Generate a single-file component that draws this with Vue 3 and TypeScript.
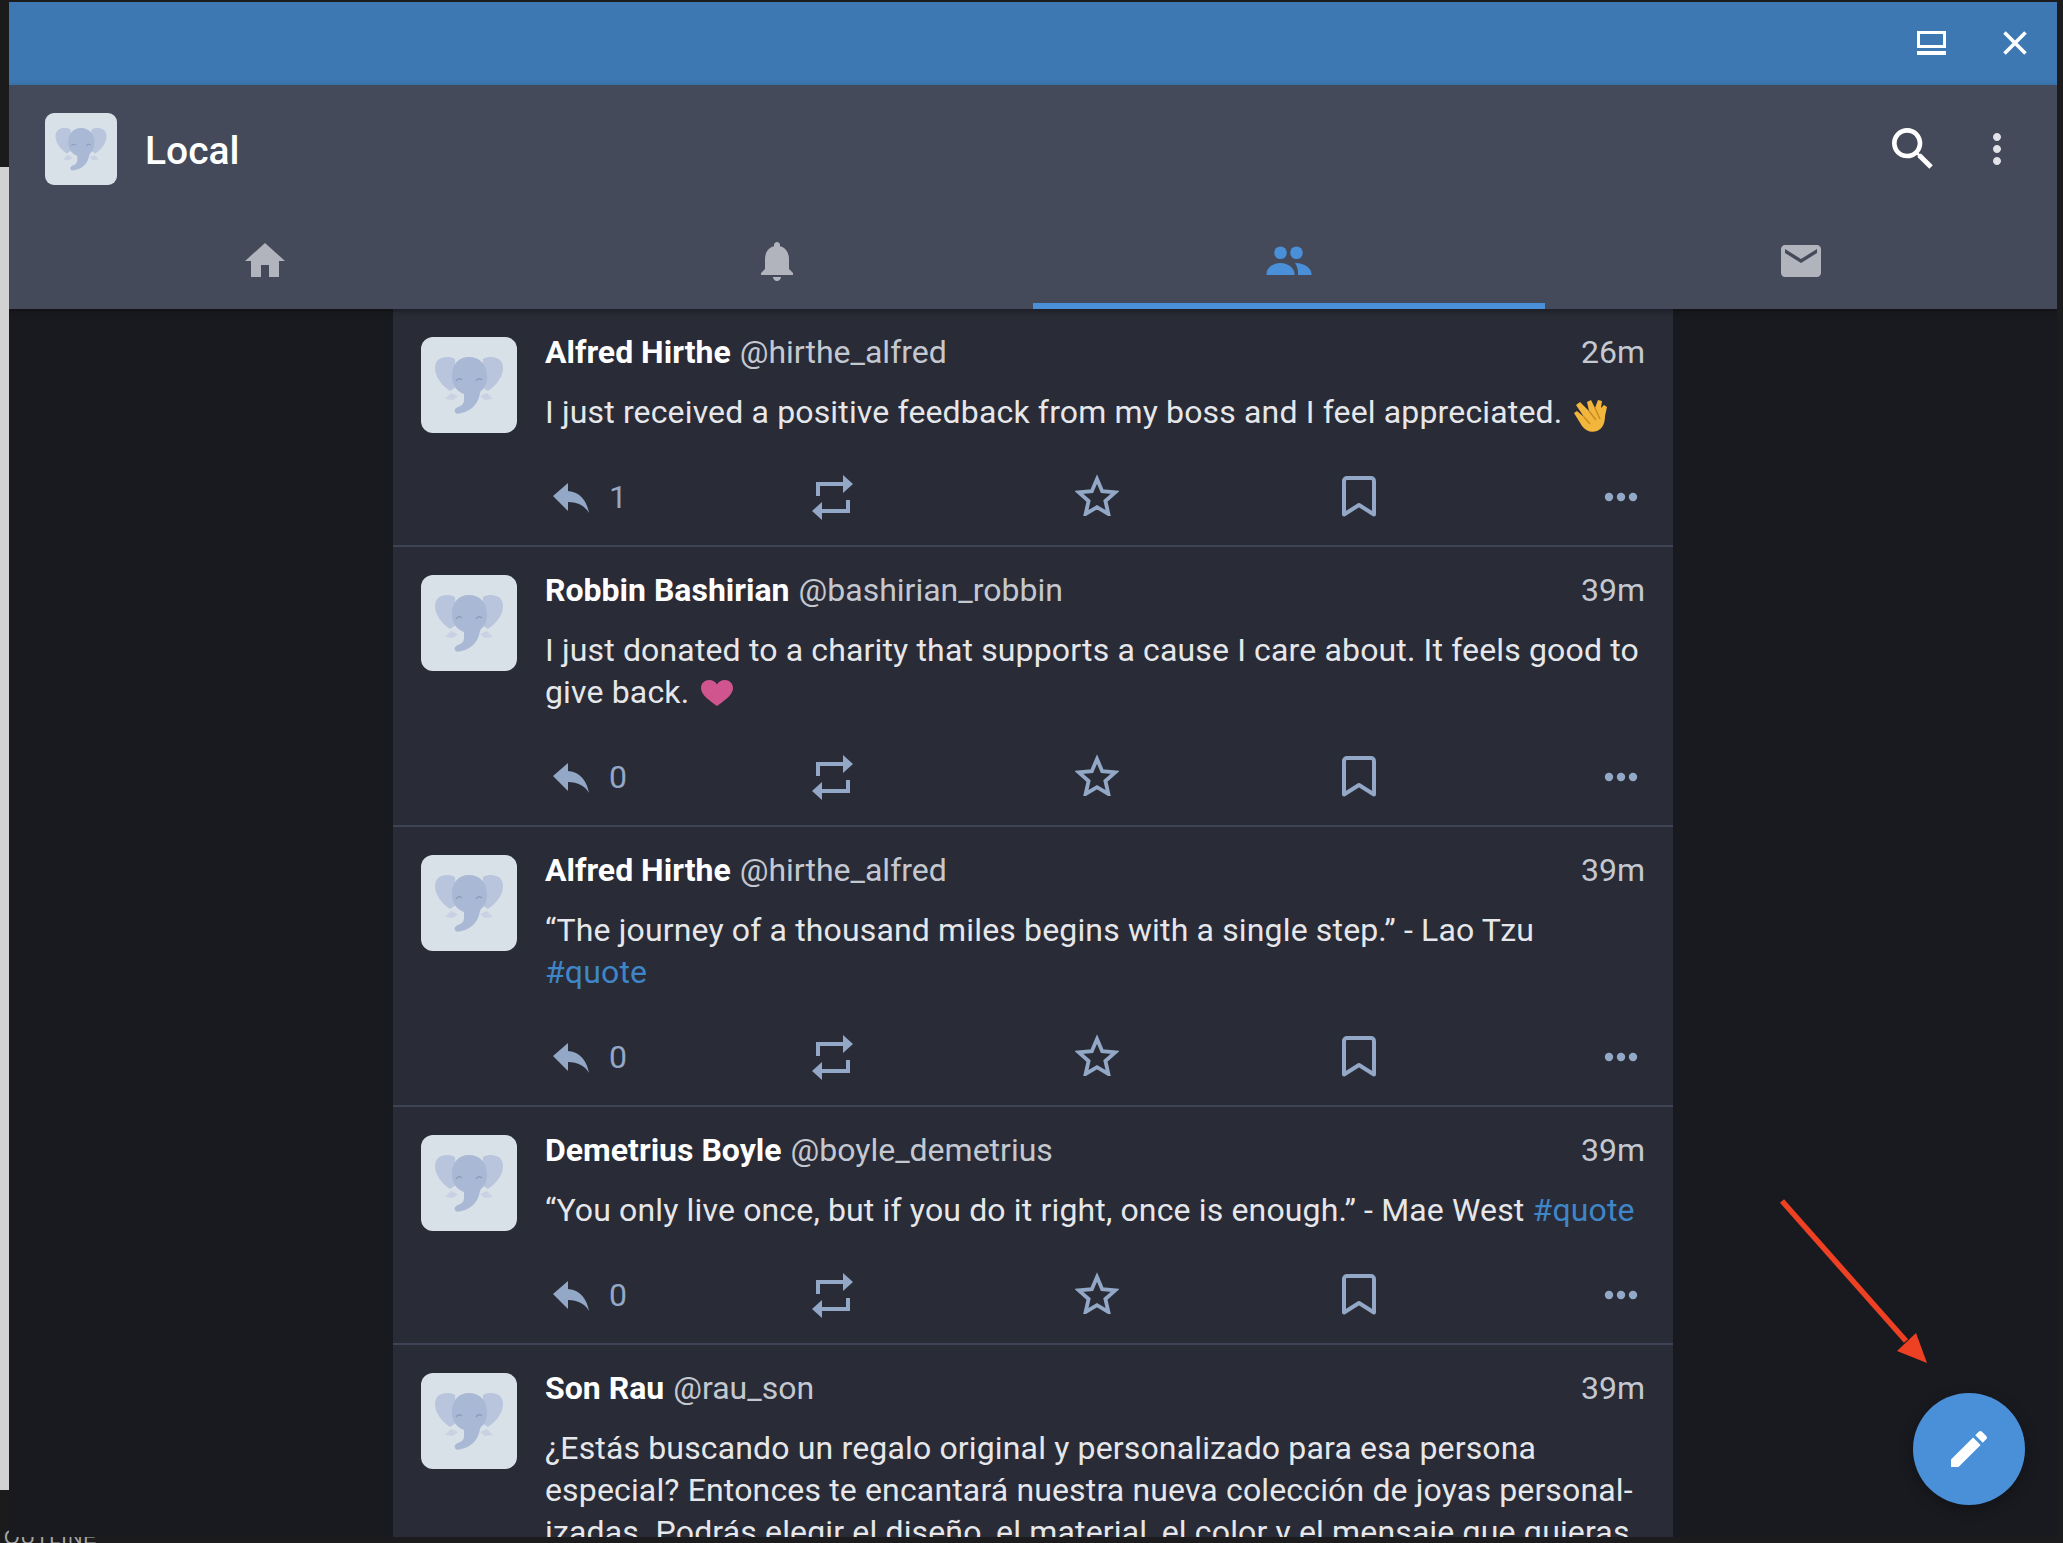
<script setup lang="ts">
type Seg = { k: 'text' | 'tag' | 'heart' | 'clap'; v?: string }
type Post = { name: string; handle: string; time: string; replies?: string; body: Seg[] }

const posts: Post[] = [
  {
    name: 'Alfred Hirthe', handle: '@hirthe_alfred', time: '26m', replies: '1',
    body: [{ k: 'text', v: 'I just received a positive feedback from my boss and I feel appreciated. ' }, { k: 'clap' }],
  },
  {
    name: 'Robbin Bashirian', handle: '@bashirian_robbin', time: '39m', replies: '0',
    body: [{ k: 'text', v: 'I just donated to a charity that supports a cause I care about. It feels good to give back. ' }, { k: 'heart' }],
  },
  {
    name: 'Alfred Hirthe', handle: '@hirthe_alfred', time: '39m', replies: '0',
    body: [{ k: 'text', v: '“The journey of a thousand miles begins with a single step.” - Lao Tzu\n' }, { k: 'tag', v: '#quote' }],
  },
  {
    name: 'Demetrius Boyle', handle: '@boyle_demetrius', time: '39m', replies: '0',
    body: [{ k: 'text', v: '“You only live once, but if you do it right, once is enough.” - Mae West ' }, { k: 'tag', v: '#quote' }],
  },
  {
    name: 'Son Rau', handle: '@rau_son', time: '39m',
    body: [{ k: 'text', v: '¿Estás buscando un regalo original y personalizado para esa persona\nespecial? Entonces te encantará nuestra nueva colección de joyas personal-\nizadas. Podrás elegir el diseño, el material, el color y el mensaje que quieras' }],
  },
]

const tabs = [
  { id: 'home', d: 'M10 20v-6h4v6h5v-8h3L12 3 2 12h3v8z' },
  { id: 'bell', d: 'M12 22c1.1 0 2-.9 2-2h-4c0 1.1.9 2 2 2zm6-6v-5c0-3.07-1.63-5.64-4.5-6.32V4c0-.83-.67-1.5-1.5-1.5s-1.5.67-1.5 1.5v.68C7.64 5.36 6 7.92 6 11v5l-2 2v1h16v-1l-2-2z' },
  { id: 'people', d: '' },
  { id: 'mail', d: 'M20 4H4c-1.1 0-1.99.9-1.99 2L2 18c0 1.1.9 2 2 2h16c1.1 0 2-.9 2-2V6c0-1.1-.9-2-2-2zm0 4l-8 5-8-5V6l8 5 8-5v2z' },
]
</script>

<template>
  <div class="page">
    <span class="behind">OUTLINE</span>
    <div class="window">
      <div class="titlebar">
        <svg class="tb-screen" width="30" height="24" viewBox="0 0 30 24">
          <rect x="1.5" y="1.5" width="26" height="14" fill="none" stroke="#fff" stroke-width="3" />
          <rect x="0" y="20" width="29" height="4" fill="#fff" />
        </svg>
        <svg class="tb-close" width="26" height="26" viewBox="0 0 26 26">
          <path d="M2.5 2.5l21 21M23.5 2.5l-21 21" stroke="#fff" stroke-width="3.6" fill="none" />
        </svg>
      </div>

      <header class="header">
        <div class="toolbar">
          <svg class="avatar small" viewBox="0 0 96 96">
            <rect width="96" height="96" rx="12" fill="#d9e1e8" />
            <path d="M34 22c-8-4-20-2-20 9 0 8 6 17 15 23l6-4z" fill="#b8c5dc" />
            <path d="M62 22c8-4 20-2 20 9 0 8-6 17-15 23l-6-4z" fill="#b8c5dc" />
            <path d="M30 56l-6 6 8 1 5-4zM66 56l6 6-8 1-5-4z" fill="#c8d2e3" />
            <path d="M48 20c-10 0-17 7-17 19 0 9 5 16 12 18v6c0 4-3 6-6 7-3 1-4 3-3 5 1 2 3 2 6 1 7-1 14-6 17-13 2-5 2-8 3-9 4-3 6-8 6-15 0-12-8-19-18-19z" fill="#a9b9d5" />
            <path d="M35 44q3-4 6-1M55 44q3-4 6-1" stroke="#8c9dbe" stroke-width="1.4" fill="none" />
          </svg>
          <h1 class="title">Local</h1>
          <svg class="tool-search" width="56" height="56" viewBox="0 0 24 24">
            <path fill="#fff" d="M15.5 14h-.79l-.28-.27C15.41 12.59 16 11.11 16 9.5 16 5.91 13.09 3 9.5 3S3 5.91 3 9.5 5.91 16 9.5 16c1.61 0 3.09-.59 4.23-1.57l.27.28v.79l5 4.99L20.49 19l-4.99-5zm-6 0C7.01 14 5 11.99 5 9.5S7.01 5 9.5 5 14 7.01 14 9.5 11.99 14 9.5 14z" />
          </svg>
          <svg class="tool-more" width="48" height="48" viewBox="0 0 24 24">
            <path fill="#e2e3e6" d="M12 8c1.1 0 2-.9 2-2s-.9-2-2-2-2 .9-2 2 .9 2 2 2zm0 2c-1.1 0-2 .9-2 2s.9 2 2 2 2-.9 2-2-.9-2-2-2zm0 6c-1.1 0-2 .9-2 2s.9 2 2 2 2-.9 2-2-.9-2-2-2z" />
          </svg>
        </div>
        <nav class="tabs">
          <div v-for="t in tabs" :key="t.id" class="tab" :class="{ active: t.id === 'people' }">
            <svg v-if="t.d" width="48" height="48" viewBox="0 0 24 24"><path fill="#b1b4bd" :d="t.d" /></svg>
            <svg v-else width="48" height="48" viewBox="0 0 48 48" fill="#4a90d9">
              <circle cx="15.5" cy="15.7" r="6.3" />
              <circle cx="31.5" cy="15.7" r="6.3" />
              <path d="M1.5 38v-1c0-6 6.5-11 14-11s14 5 14 11v1z" />
              <path d="M31 26c8 0 15.5 5 15.5 11v1H33v-2c0-4-1-7-3-10z" />
            </svg>
          </div>
        </nav>
      </header>

      <main class="content">
        <section class="column">
          <article v-for="(p, i) in posts" :key="i" class="post">
            <svg class="avatar" viewBox="0 0 96 96">
              <rect width="96" height="96" rx="12" fill="#d9e1e8" />
              <path d="M34 22c-8-4-20-2-20 9 0 8 6 17 15 23l6-4z" fill="#b8c5dc" />
              <path d="M62 22c8-4 20-2 20 9 0 8-6 17-15 23l-6-4z" fill="#b8c5dc" />
              <path d="M30 56l-6 6 8 1 5-4zM66 56l6 6-8 1-5-4z" fill="#c8d2e3" />
              <path d="M48 20c-10 0-17 7-17 19 0 9 5 16 12 18v6c0 4-3 6-6 7-3 1-4 3-3 5 1 2 3 2 6 1 7-1 14-6 17-13 2-5 2-8 3-9 4-3 6-8 6-15 0-12-8-19-18-19z" fill="#a9b9d5" />
              <path d="M35 44q3-4 6-1M55 44q3-4 6-1" stroke="#8c9dbe" stroke-width="1.4" fill="none" />
            </svg>
            <div class="main">
              <div class="head">
                <span class="name">{{ p.name }}</span>
                <span class="handle">{{ p.handle }}</span>
                <span class="time">{{ p.time }}</span>
              </div>
              <p class="body">
                <template v-for="(s, j) in p.body" :key="j">
                  <span v-if="s.k === 'text'">{{ s.v }}</span>
                  <a v-else-if="s.k === 'tag'" class="tag">{{ s.v }}</a>
                  <svg v-else-if="s.k === 'heart'" class="heart" width="32" height="26" viewBox="0 0 32 26">
                    <path fill="#d0558f" d="M16 26C6 19 0 14 0 8c0-5 4-8 8-8 3.500 0 6.500 1.500 8 4.500C17.500 1.500 20.500 0 24 0c4 0 8 3 8 8 0 6-6 11-16 18z" />
                  </svg>
                  <svg v-else class="clap" width="38" height="36" viewBox="0 0 38 36">
                    <path fill="#f3b63d" d="M4 9l4-3 9 9-2-9 4-2 4 8 3-8 4 1-1 7 3-3 3 2-2 9c0 8-3 13-8 15-6 2-11 0-15-5L2 17l3-2 7 6z" />
                    <path fill="none" stroke="#c98a1e" stroke-width="1.5" d="M12 21l6 7M17 15l7 9M23 12l5 11" />
                  </svg>
                </template>
              </p>
              <div class="actions">
                <div class="act">
                  <svg width="36" height="30" viewBox="0 0 36 30" class="ic-reply">
                    <path fill="#93a8c6" d="M0 13L15 0v8c13 1 19 11 21 22-4-7-11-11-21-11v9z" />
                  </svg>
                  <span v-if="p.replies" class="count">{{ p.replies }}</span>
                </div>
                <div class="act">
                  <svg width="42" height="45" viewBox="0 0 42 45" class="ic-rt" fill="#93a8c6">
                    <path d="M6 21V9h26" fill="none" stroke="#93a8c6" stroke-width="4" />
                    <path d="M31 0l10 9-10 9z" />
                    <path d="M36 25v11H9" fill="none" stroke="#93a8c6" stroke-width="4" />
                    <path d="M10 27L0 36l10 9z" />
                  </svg>
                </div>
                <div class="act">
                  <svg width="44" height="42" viewBox="0 0 44 42" class="ic-star">
                    <path fill="none" stroke="#93a8c6" stroke-width="3.800" stroke-linejoin="miter" d="M22 5l5.200 12.200 13 1.200-9.800 8.600 3 13L22 33.100 10.600 40l3-13-9.800-8.600 13-1.200z" />
                  </svg>
                </div>
                <div class="act">
                  <svg width="34" height="42" viewBox="0 0 34 42" class="ic-book">
                    <path fill="none" stroke="#93a8c6" stroke-width="4" stroke-linejoin="round" d="M2 38.500V5c0-1.700 1.300-3 3-3h24c1.700 0 3 1.300 3 3v33.500L17 29z" />
                  </svg>
                </div>
                <div class="act">
                  <svg width="34" height="10" viewBox="0 0 34 10" class="ic-more" fill="#93a8c6">
                    <circle cx="5" cy="5" r="4.200" /><circle cx="17" cy="5" r="4.200" /><circle cx="29" cy="5" r="4.200" />
                  </svg>
                </div>
              </div>
            </div>
          </article>
        </section>
      </main>

      <button class="fab" type="button" aria-label="Compose">
        <svg width="48" height="48" viewBox="0 0 24 24">
          <path fill="#fff" d="M3 17.250V21h3.750L17.810 9.940l-3.750-3.750L3 17.250zM20.710 7.040c.39-.39.39-1.020 0-1.410l-2.340-2.340c-.39-.39-1.020-.39-1.410 0l-1.830 1.830 3.750 3.750 1.830-1.830z" />
        </svg>
      </button>
    </div>

    <svg class="arrow" width="160" height="180" viewBox="0 0 160 180">
      <path d="M3 3L127 143" stroke="#ee4023" stroke-width="5.500" fill="none" />
      <path d="M148 165L118 153 137 135z" fill="#ee4023" />
    </svg>
  </div>
</template>

<style>
html, body { margin: 0; background: #1c1c1e; }
</style>

<style scoped>
.page {
  position: relative;
  width: 2063px;
  height: 1543px;
  overflow: hidden;
  box-sizing: border-box;
  padding: 2px 6px 6px 9px;
  font-family: Roboto, "Noto Sans", sans-serif;
  background: linear-gradient(to bottom, #1b1b1c 0, #1b1b1c 167px, #d2d2d2 167px, #d2d2d2 1490px, #1b1b1c 1490px) left top / 9px 100% no-repeat, #1c1c1e;
}
.behind {
  position: absolute;
  left: 4px;
  top: 1526px;
  font: 20px "Liberation Sans", sans-serif;
  letter-spacing: 1px;
  color: #a8a8a8;
}
.window {
  position: relative;
  height: 100%;
  display: flex;
  flex-direction: column;
  background: #191a1f;
  overflow: hidden;
}
.titlebar {
  flex: none;
  box-sizing: border-box;
  height: 83px;
  padding: 0 29px 2px 0;
  background: #3d78b3;
  display: flex;
  align-items: center;
  justify-content: flex-end;
  gap: 55px;
}
.header {
  flex: none;
  position: relative;
  z-index: 1;
  background: #454a5a;
  box-shadow: 0 2px 6px rgba(0, 0, 0, .35);
}
.toolbar {
  box-sizing: border-box;
  height: 122px;
  padding: 6px 0 0 36px;
  display: flex;
  align-items: center;
}
.avatar { flex: none; width: 96px; height: 96px; display: block; }
.avatar.small { width: 72px; height: 72px; }
.title {
  margin: 4px 0 0 28px;
  font-size: 39px;
  font-weight: 500;
  color: #fff;
  flex: 1;
}
.tool-search { flex: none; margin-right: 32px; }
.tool-more { flex: none; margin-right: 36px; }
.tabs { display: flex; height: 102px; }
.tab {
  flex: 1;
  display: flex;
  align-items: center;
  justify-content: center;
  padding-top: 6px;
  box-sizing: border-box;
}
.tab.active { border-bottom: 6px solid #4a90d9; padding-top: 12px; }
.content {
  flex: 1;
  min-height: 0;
  overflow: hidden;
  display: flex;
  justify-content: center;
}
.column { width: 1280px; background: #292b36; }
.post {
  display: flex;
  gap: 28px;
  padding: 28px 28px 23px;
  border-bottom: 2px solid #3e4455;
}
.main { flex: 1; min-width: 0; }
.head {
  display: flex;
  gap: 9px;
  height: 28px;
  line-height: 30px;
  font-size: 32px;
  white-space: nowrap;
}
.name { font-weight: 700; color: #fff; }
.handle { color: #c4c8d0; }
.time { margin-left: auto; color: #c4c8d0; }
.body {
  margin: 26px 0 39px;
  font-size: 32px;
  letter-spacing: .15px;
  line-height: 42px;
  color: #e6e7ea;
  white-space: pre-line;
}
.tag { color: #3f86c8; }
.heart { vertical-align: -3px; margin-left: 4px; }
.clap { vertical-align: -9px; margin-left: 2px; }
.actions {
  display: grid;
  grid-template-columns: repeat(4, 263px) 50px;
  height: 50px;
}
.act { display: flex; align-items: center; }
.ic-reply { margin-left: 8px; margin-top: 2px; }
.count { margin-left: 20px; font-size: 32px; color: #93a8c6; }
.ic-rt { margin-left: 4px; }
.ic-star { margin-left: 4px; margin-top: -4px; }
.ic-book { margin-left: 8px; margin-top: -1px; }
.ic-more { margin-left: 7px; }
.fab {
  position: absolute;
  left: 1904px;
  top: 1391px;
  width: 112px;
  height: 112px;
  border: 0;
  padding: 0;
  border-radius: 50%;
  background: #4a90d9;
  display: flex;
  align-items: center;
  justify-content: center;
  z-index: 2;
  box-shadow: 0 4px 14px rgba(0, 0, 0, .3);
}
.arrow { position: absolute; left: 1779px; top: 1198px; }
</style>
